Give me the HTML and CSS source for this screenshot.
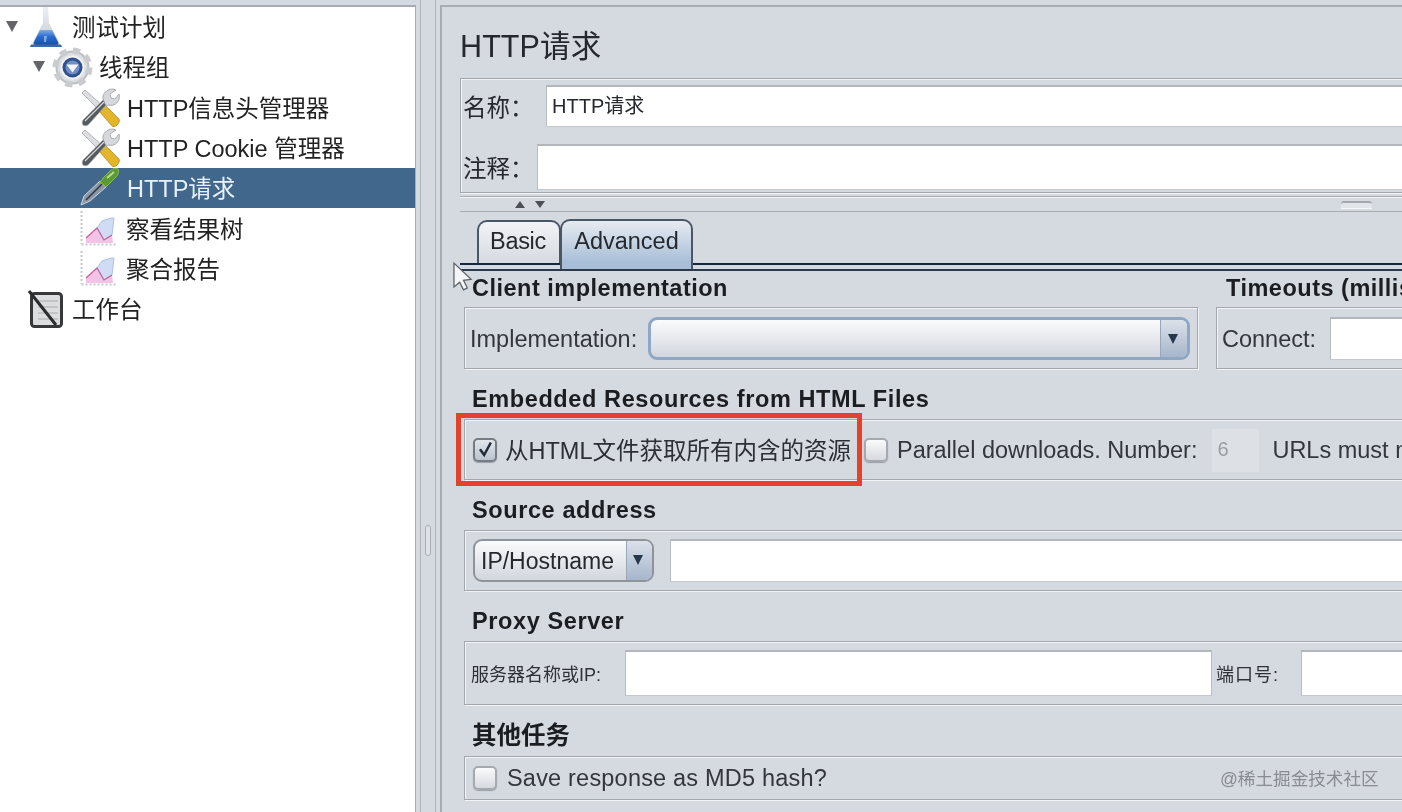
FILE: index.html
```html
<!DOCTYPE html>
<html lang="zh">
<head>
<meta charset="utf-8">
<title>HTTP请求</title>
<link rel="stylesheet" href="styles.css">
</head>
<body>
<div class="app">
  <aside class="tree">
    <div class="row row-plan">
      <span class="twisty"></span>
      <svg class="ic ic-flask" viewBox="0 0 32 40"><defs><linearGradient id="fl" x1="0" y1="0" x2="0" y2="1"><stop offset="0" stop-color="#7fa9e8"/><stop offset=".45" stop-color="#2a6bd0"/><stop offset="1" stop-color="#1450b0"/></linearGradient><linearGradient id="gl" x1="0" y1="0" x2="0" y2="1"><stop offset="0" stop-color="#eceef2"/><stop offset="1" stop-color="#c4cad4"/></linearGradient></defs><path d="M13 0h5l1 16 10 19c1 3 0 4-2 4H5c-2 0-3-1-2-4l10-19z" fill="url(#gl)"/><path d="M10 23h12l6 12c1 2 0 3-2 3H6c-2 0-3-1-2-3z" fill="url(#fl)"/><path d="M1 37.500h30l1 2.500H0z" fill="#3d6a9c"/><path d="M14 29h3l-1 6h-2z" fill="#a8c6f2" opacity=".7"/></svg>
      <span class="label">测试计划</span>
    </div>
    <div class="row row-group">
      <span class="twisty"></span>
      <svg class="ic ic-gear" viewBox="0 0 41 41"><circle cx="20.500" cy="20.500" r="16" fill="#dcdee1" stroke="#bcbfc4" stroke-width="2"/><circle cx="20.500" cy="20.500" r="17" fill="none" stroke="#c9cbcf" stroke-width="6" stroke-dasharray="7 6.350"/><circle cx="20.500" cy="20.500" r="12" fill="#f1f2f4"/><circle cx="20.500" cy="20.500" r="10" fill="#2f528f"/><circle cx="20.500" cy="20.500" r="7" fill="#6f8fc6"/><path d="M14.500 17.500h12l-6 8z" fill="#f3f6fb"/></svg>
      <span class="label">线程组</span>
    </div>
    <div class="row row-leaf">
      <svg class="ic ic-tool" viewBox="0 0 40 40"><use href="#tools"/></svg>
      <span class="label">HTTP信息头管理器</span>
    </div>
    <div class="row row-leaf">
      <svg class="ic ic-tool" viewBox="0 0 40 40">
        <defs>
          <g id="tools">
            <path d="M2 5l3-3 19 17-4 4z" fill="#dcdee1" stroke="#a3a6aa" stroke-width=".8"/>
            <path d="M19 23l6-6 14 14c1 2 0 4-2 6s-4 2-5 1z" fill="#e3b52a" stroke="#b08a1e" stroke-width=".8"/>
            <path d="M3 32L24 11l4 4L8 37c-2 1-4 1-5 0s-1-3 0-5z" fill="#56595e" stroke="#a7aaae" stroke-width=".8"/>
            <path d="M5 33L24 14" stroke="#d5d7da" stroke-width="1.200"/>
            <path d="M23 11c-1-5 4-10 10-10l3 1-6 4 1 4 4 1 4-5c2 7-4 13-11 11l-2 1z" fill="#d6d8dc" stroke="#9a9da2" stroke-width=".8"/>
          </g>
        </defs>
        <use href="#tools"/>
      </svg>
      <span class="label">HTTP Cookie 管理器</span>
    </div>
    <div class="row row-leaf row-selected">
      <svg class="ic ic-tool" viewBox="0 0 40 40"><path d="M1 37l3-9L20 13l6 6L10 33z" fill="#8b97a6" stroke="#cfd6de" stroke-width="1"/><path d="M6 32l16-16" stroke="#2b3440" stroke-width="1.500"/><path d="M20 14l4-5 6-6c3-3 7-3 8-2s1 5-2 8l-6 6-4 4z" fill="#5c9a2f" stroke="#8cbb5c" stroke-width="1"/><path d="M27 10l7-6" stroke="#bcdc92" stroke-width="2"/></svg>
      <span class="label">HTTP请求</span>
    </div>
    <div class="row row-leaf row-chart">
      <svg class="ic ic-chart" viewBox="0 0 37 38"><use href="#chart"/></svg>
      <span class="label">察看结果树</span>
    </div>
    <div class="row row-leaf row-chart">
      <svg class="ic ic-chart" viewBox="0 0 37 38">
        <defs>
          <g id="chart">
            <path d="M1.500 1v33M1.500 34.500H36" fill="none" stroke="#c8c8cc" stroke-width="2" stroke-dasharray="2 2"/>
            <path d="M17 18l5-7 9-3h3l-2 17-8 5z" fill="#cfdcf4" stroke="#adc2e4" stroke-width="1"/>
            <path d="M6 33v-5l11-10 7 12 8-5 1 8z" fill="#f4c2e6"/>
            <path d="M6 28l11-10 7 12 8-5" fill="none" stroke="#c05f96" stroke-width="1.200"/>
          </g>
        </defs>
        <use href="#chart"/>
      </svg>
      <span class="label">聚合报告</span>
    </div>
    <div class="row row-bench">
      <svg class="ic ic-bench" viewBox="0 0 36 38"><rect x="3.500" y="3.500" width="30" height="33" rx="3" fill="#dcdddf" stroke="#38383a" stroke-width="3"/><path d="M10 11h20M10 17h20M10 23h20M10 29h20" stroke="#bbbcbf" stroke-width="1.500"/><path d="M1 1l27 34" stroke="#2c2c2e" stroke-width="3"/></svg>
      <span class="label">工作台</span>
    </div>
  </aside>

  <div class="gutter"><span class="gutter-handle"></span></div>

  <main class="main">
    <h1 class="title">HTTP请求</h1>

    <div class="box name-box">
      <div class="name-row name-row-a">
        <span class="name-label name-label-a">名称：</span>
        <div class="field name-field">HTTP请求</div>
      </div>
      <div class="name-row name-row-b">
        <span class="name-label name-label-b">注释：</span>
        <div class="field comment-field"></div>
      </div>
    </div>

    <div class="splitter">
      <span class="arrow-up"></span>
      <span class="arrow-down"></span>
      <span class="split-handle"></span>
    </div>

    <div class="tabs">
      <div class="tab tab-basic">Basic</div>
      <div class="tab tab-advanced">Advanced</div>
    </div>
    <div class="tab-band"></div>

    <div class="content">
      <div class="two-col">
        <section class="col-impl">
          <h2 class="sec-title">Client implementation</h2>
          <div class="box box-row box-impl">
            <span class="text">Implementation:</span>
            <div class="combo combo-wide"><span class="combo-val"></span><span class="combo-btn"></span></div>
          </div>
        </section>
        <section class="col-time">
          <h2 class="sec-title">Timeouts (milliseconds)</h2>
          <div class="box box-row box-time">
            <span class="text">Connect:</span>
            <div class="field time-field"></div>
          </div>
        </section>
      </div>

      <section class="sec">
        <h2 class="sec-title">Embedded Resources from HTML Files</h2>
        <div class="box box-row box-embed">
          <span class="check checked"><svg viewBox="0 0 24 24"><path d="M6 11l5 7 8-15" fill="none" stroke="#1f2a3a" stroke-width="3"/></svg></span>
          <span class="text text-all">从HTML文件获取所有内含的资源</span>
          <span class="check check-par"></span>
          <span class="text text-par">Parallel downloads. Number:</span>
          <div class="num-field">6</div>
          <span class="text">URLs must match:</span>
          <span class="red-mark"></span>
        </div>
      </section>

      <section class="sec">
        <h2 class="sec-title">Source address</h2>
        <div class="box box-row box-src">
          <div class="combo combo-ip"><span class="combo-val">IP/Hostname</span><span class="combo-btn"></span></div>
          <div class="field src-field"></div>
        </div>
      </section>

      <section class="sec">
        <h2 class="sec-title">Proxy Server</h2>
        <div class="box box-row box-proxy">
          <span class="small small-host">服务器名称或IP:</span>
          <div class="field host-field"></div>
          <span class="small small-port">端口号:</span>
          <div class="field port-field"></div>
        </div>
      </section>

      <section class="sec sec-other">
        <h2 class="sec-title sec-title-cn">其他任务</h2>
        <div class="box box-row box-other">
          <span class="check"></span>
          <span class="text">Save response as MD5 hash?</span>
        </div>
      </section>
    </div>

    <svg class="cursor" viewBox="0 0 22 30"><path d="M1 1l0 25 6-5 4 8 4-2-4-8 8-1z" fill="#f4f6f8" stroke="#5b5f66" stroke-width="1.300"/></svg>
  </main>
  <span class="watermark">@稀土掘金技术社区</span>
</div>
</body>
</html>
```
FILE: styles.css
```css
* { box-sizing: border-box; }
html, body { margin: 0; height: 100%; overflow: hidden; }
body { background: #d5d9e0; }
.app {
  position: relative;
  display: flex;
  height: 812px;
  width: 1402px;
  overflow: hidden;
  background: #d5d9e0;
  color: #25282d;
  font-family: "Liberation Sans", "Noto Sans CJK SC", sans-serif;
  font-size: 23.5px;
  filter: blur(.4px);
}

/* tree */
.tree {
  flex: none;
  width: 416px;
  margin-top: 5px;
  background: #fff;
  border-top: 2px solid #a8acb3;
  border-right: 1px solid #a8acb3;
}
.row { display: flex; align-items: center; height: 40.3px; color: #222; }
.label { margin-bottom: 2px; }
.ic { flex: none; display: block; overflow: visible; }
.twisty {
  flex: none;
  width: 0; height: 0;
  border-left: 6px solid transparent;
  border-right: 6px solid transparent;
  border-top: 11px solid #636569;
  margin-top: -2px;
}
.row-plan { padding-left: 6px; }
.row-plan .twisty { margin-right: 12px; }
.ic-flask { width: 32px; height: 40px; margin-right: 10px; }
.row-group { padding-left: 33px; }
.row-group .twisty { margin-right: 7px; }
.ic-gear { width: 41px; height: 41px; margin-right: 6px; }
.row-leaf { padding-left: 80px; }
.ic-tool { width: 40px; height: 40px; margin-right: 7px; }
.ic-chart { width: 37px; height: 38px; margin-right: 9px; }
.row-selected { background: #41678c; color: #e6f1fb; }
.row-bench { padding-left: 28px; }
.ic-bench { width: 36px; height: 38px; margin-right: 8px; }

/* gutter */
.gutter {
  flex: none;
  width: 16px;
  margin: 0 4px;
  padding: 525px 0 0 4px;
  border-left: 1px solid #b1b5bc;
  border-right: 1px solid #b1b5bc;
}
.gutter-handle {
  display: block;
  width: 6px; height: 31px;
  border: 1px solid #a9adb4;
  border-radius: 3px;
  background: #dfe2e7;
}

/* main */
.main {
  position: relative;
  flex: none;
  width: 1000px;
  margin-top: 5px;
  padding-left: 18px;
  border-top: 2px solid #a8acb3;
  border-left: 2px solid #a8acb3;
}
.title {
  margin: 0;
  padding-top: 7px;
  height: 71px;
  line-height: 65px;
  font-size: 30.5px;
  font-weight: 400;
  letter-spacing: .1px;
  color: #25282d;
}
.box {
  border: 1px solid #a4a8ae;
  box-shadow: inset 1px 1px 0 #f1f3f5, 1px 1px 0 #f1f3f5;
}
.box-row { position: relative; display: flex; align-items: center; }
.field {
  background: #fff;
  border-top: 2px solid #b3b6bb;
  border-left: 1px solid #b9bcc1;
  border-bottom: 1px solid #c4c7cc;
}

.name-box { height: 115px; padding: 6px 0 0 2px; }
.name-row { display: flex; align-items: flex-start; }
.name-row-a { height: 42px; }
.name-row-b { height: 46px; margin-top: 17px; }
.name-label { flex: none; font-family: "Liberation Sans", "Noto Sans CJK TC", sans-serif; line-height: 46px; }
.name-label-a { width: 83px; }
.name-label-b { width: 74px; line-height: 50px; }
.name-field { flex: 1; height: 42px; line-height: 38px; padding-left: 5px; font-size: 20px; }
.comment-field { flex: 1; height: 46px; }

.splitter {
  display: flex;
  align-items: center;
  height: 16px;
  margin-top: 3px;
  padding-left: 55px;
  border-top: 1px solid #a8acb3;
  box-shadow: inset 0 1px 0 #f1f3f5;
  border-bottom: 1px solid #a8acb3;
}
.arrow-up, .arrow-down { width: 0; height: 0; border-left: 5.5px solid transparent; border-right: 5.5px solid transparent; }
.arrow-up { border-bottom: 7px solid #4d5055; }
.arrow-down { margin-left: 10px; border-top: 7px solid #4d5055; }
.split-handle {
  width: 31px; height: 7px;
  margin-left: 796px;
  border-top: 2px solid #a3a7ad;
  border-radius: 3px 3px 0 0;
  background: #e2e5ea;
  box-shadow: 0 1px 0 #f7f8fa;
}

.tabs {
  display: flex;
  align-items: flex-end;
  height: 51px;
  padding-left: 17px;
}
.tab {
  border: 2px solid #4a5664;
  border-bottom: 0;
  border-radius: 10px 10px 0 0;
  text-align: center;
}
.tab-basic {
  width: 84px; height: 43px; line-height: 39px;
  padding-right: 2px;
  letter-spacing: -.3px;
  background: linear-gradient(#f2f3f6, #d6dae1);
}
.tab-advanced {
  position: relative;
  z-index: 1;
  width: 133px; height: 50px; line-height: 40px;
  margin-bottom: -6px;
  margin-left: -1px;
  background: linear-gradient(#e6ebf1, #a9bfd8 85%);
  padding-bottom: 7px;
}
.tab-band {
  height: 8px;
  border-top: 2px solid #17263a;
  border-bottom: 2px solid #2c3a4c;
  background: #d3dae4;
}

/* content */
.content { padding: 0 0 0 4px; }
.two-col { display: flex; gap: 18px; }
.col-impl { flex: none; width: 734px; }
.col-time { flex: 1; }
.sec { margin-top: 14px; }
.sec-other { margin-top: 15px; }
.sec-title {
  margin: 0;
  height: 36px;
  padding-left: 8px;
  line-height: 32px;
  font-size: 23.5px;
  font-weight: 700;
  letter-spacing: .6px;
  white-space: nowrap;
  color: #1b1d21;
}
.two-col .sec-title { line-height: 34px; letter-spacing: .5px; }
.col-time .sec-title { padding-left: 10px; }
.sec-title-cn { font-size: 24.5px; letter-spacing: 0; }
.text { flex: none; white-space: nowrap; color: #33373d; }

.box-impl { height: 62px; padding-left: 5px; }
.box-impl .text { margin: 2px 11px 0 0; }
.combo {
  flex: none;
  display: flex;
  height: 43px;
  border: 2px solid #8198b4;
  border-radius: 9px;
  overflow: hidden;
  background: linear-gradient(#fafbfc, #d2d6dd);
}
.combo-wide { width: 542px; border-width: 3px; border-color: #8ea7c4; }
.combo-val { flex: 1; padding-left: 6px; line-height: 40px; white-space: nowrap; }
.combo-btn {
  position: relative;
  flex: none;
  width: 27px;
  border-left: 1px solid #9aa7b8;
  background: linear-gradient(#dbe1ea, #a6b6cb);
}
.combo-btn::after {
  content: "";
  position: absolute;
  left: 7px; top: 14px;
  border-left: 5px solid transparent;
  border-right: 5px solid transparent;
  border-top: 10px solid #27384d;
}
.box-time { height: 62px; padding-left: 5px; }
.box-time .text { margin: 2px 14px 0 0; }
.time-field { flex: 1; height: 43px; }

.box-embed { height: 61px; padding: 1px 0 0 8px; }
.check {
  flex: none;
  width: 24px; height: 24px;
  border: 2px solid #a5a9b0;
  border-radius: 5px;
  background: linear-gradient(#fafbfc, #d6d9df);
  box-shadow: 0 1px 1px #9a9ea5;
}
.check svg { display: block; width: 100%; height: 100%; overflow: visible; }
.checked { background: linear-gradient(#e2e6ec, #bcc4d0); border-color: #767b84; }
.text-all { margin: 0 0 3px 8px; font-size: 23.5px; color: #2c2f35; }
.check-par { margin-left: 13px; }
.text-par { margin-left: 9px; }
.num-field {
  flex: none;
  width: 47px; height: 43px;
  margin: 0 13px 0 15px;
  padding-left: 5px;
  line-height: 40px;
  font-size: 20px;
  color: #9a9da3;
  background: #dde0e5;
}
.red-mark {
  position: absolute;
  left: -9px; top: -7px;
  width: 406px; height: 73px;
  border: 5px solid #e4432b;
}

.box-src { height: 61px; padding-left: 8px; }
.combo-ip { width: 181px; border-color: #8f949b; font-size: 23px; }
.combo-ip .combo-val { line-height: 40px; }
.combo-ip .combo-btn { width: 26px; }
.combo-ip .combo-btn::after { left: 6px; }
.src-field { flex: 1; height: 43px; margin-left: 16px; }

.box-proxy { height: 64px; padding-left: 6px; }
.small { flex: none; font-size: 18px; color: #2e3136; white-space: nowrap; }
.small-host { width: 154px; }
.host-field { flex: none; width: 587px; height: 46px; border-right: 1px solid #b9bcc1; }
.small-port { width: 89px; padding-left: 4px; letter-spacing: 1px; }
.port-field { flex: 1; height: 46px; }

.box-other { height: 44px; padding-left: 8px; }
.box-other .text { margin: 1px 0 0 10px; letter-spacing: .2px; }

.cursor {
  position: absolute;
  left: 11px; top: 255px;
  width: 21px; height: 29px;
}
.watermark {
  position: absolute;
  left: 1220px; top: 768px;
  font-size: 17.6px;
  line-height: 22px;
  white-space: nowrap;
  color: #898c92;
}
```
